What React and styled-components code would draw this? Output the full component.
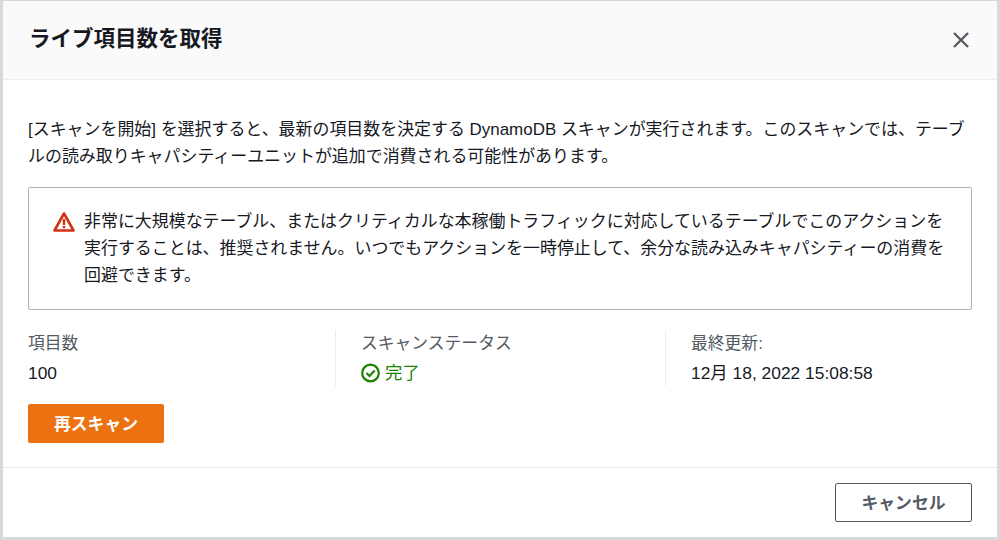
import React from 'react';
import styled, { createGlobalStyle } from 'styled-components';

const fontStack = '"Liberation Sans", "Noto Sans CJK JP", sans-serif';

const GlobalStyle = createGlobalStyle`
  html, body {
    margin: 0;
    padding: 0;
    background: #d5dbdb;
  }
  body {
    font-family: ${fontStack};
    color: #16191f;
  }
`;

const Modal = styled.div`
  box-sizing: border-box;
  width: 1000px;
  height: 540px;
  padding: 1px 3px 3px 3px;
  background: #d5dbdb;
  overflow: hidden;
`;

const Panel = styled.div`
  display: flex;
  flex-direction: column;
  height: 100%;
  background: #fff;
`;

const Header = styled.header`
  box-sizing: border-box;
  height: 79px;
  flex: none;
  display: flex;
  align-items: center;
  justify-content: space-between;
  padding: 0 27px 0 26px;
  background: #fafafa;
  border-bottom: 1px solid #eaeded;
`;

const Title = styled.h1`
  margin: 0 0 2px;
  font-size: 21.5px;
  line-height: 30px;
  font-weight: 700;
  color: #16191f;
`;

const CloseButton = styled.button`
  display: flex;
  padding: 0;
  border: 0;
  background: none;
  color: #545b64;
`;

const Body = styled.main`
  flex: 1;
  padding: 36px 25px 0;
`;

const Intro = styled.p`
  margin: 0 0 17px;
  font-size: 16.95px;
  line-height: 27px;
  color: #16191f;
`;

const Alert = styled.div`
  box-sizing: border-box;
  height: 123px;
  display: flex;
  gap: 9px;
  padding: 20px 24px;
  border: 1px solid #aab7b8;
  border-radius: 2px;
`;

const AlertIcon = styled.svg`
  flex: none;
  width: 22px;
  height: 22px;
  margin-top: 3px;
`;

const AlertText = styled.p`
  margin: 0;
  font-size: 16.95px;
  line-height: 27px;
`;

const Stats = styled.div`
  display: grid;
  grid-template-columns: 307px 330px 307px;
  margin-top: 20px;
`;

const Stat = styled.div`
  box-sizing: border-box;
  height: 56px;
  padding-left: ${(p) => (p.$first ? '0' : '25px')};
  border-left: ${(p) => (p.$first ? '0' : '1px solid #eaeded')};
`;

const StatLabel = styled.div`
  font-size: 16.8px;
  line-height: 28px;
  color: #545b64;
`;

const StatValue = styled.div`
  display: flex;
  align-items: center;
  gap: 4px;
  font-size: 17.4px;
  line-height: 30px;
  color: ${(p) => p.$color || '#16191f'};
`;

const Rescan = styled.button`
  display: block;
  width: 136px;
  height: 39px;
  margin-top: 18px;
  padding: 0 0 2px;
  border: 0;
  border-radius: 2px;
  background: #ec7211;
  color: #fff;
  font: 700 16.8px ${fontStack};
`;

const Footer = styled.footer`
  box-sizing: border-box;
  flex: none;
  height: 70px;
  display: flex;
  align-items: flex-start;
  justify-content: flex-end;
  padding: 15px 25px 0;
  border-top: 1px solid #eaeded;
`;

const Cancel = styled.button`
  box-sizing: border-box;
  width: 137px;
  height: 39px;
  padding: 0 0 2px;
  border: 1px solid #545b64;
  border-radius: 2px;
  background: #fff;
  color: #545b64;
  font: 700 16.8px ${fontStack};
`;

export default function App() {
  return (
    <>
      <GlobalStyle />
      <Modal>
        <Panel>
          <Header>
            <Title>ライブ項目数を取得</Title>
            <CloseButton aria-label="閉じる">
              <svg width="18" height="18" viewBox="0 0 18 18" fill="none" stroke="currentColor" strokeWidth="2.4">
                <path d="M2 2l14 14M16 2L2 16" />
              </svg>
            </CloseButton>
          </Header>
          <Body>
            <Intro>
              [スキャンを開始] を選択すると、最新の項目数を決定する DynamoDB スキャンが実行されます。このスキャンでは、テーブルの読み取りキャパシティーユニットが追加で消費される可能性があります。
            </Intro>
            <Alert>
              <AlertIcon viewBox="0 0 22 22" fill="none">
                <path d="M11 2.5L20.5 19.5H1.5Z" stroke="#d13212" strokeWidth="2.6" strokeLinejoin="round" />
                <path d="M11 8v6M11 15v2.2" stroke="#d13212" strokeWidth="2.4" />
              </AlertIcon>
              <AlertText>
                非常に大規模なテーブル、またはクリティカルな本稼働トラフィックに対応しているテーブルでこのアクションを実行することは、推奨されません。いつでもアクションを一時停止して、余分な読み込みキャパシティーの消費を回避できます。
              </AlertText>
            </Alert>
            <Stats>
              <Stat $first>
                <StatLabel>項目数</StatLabel>
                <StatValue>100</StatValue>
              </Stat>
              <Stat>
                <StatLabel>スキャンステータス</StatLabel>
                <StatValue $color="#1d8102">
                  <svg width="20" height="20" viewBox="0 0 20 20" fill="none" stroke="#1d8102" strokeWidth="2.2">
                    <circle cx="9.5" cy="10" r="8.3" />
                    <path d="M5.5 10l3 3 5.2-5.6" />
                  </svg>
                  完了
                </StatValue>
              </Stat>
              <Stat>
                <StatLabel>最終更新:</StatLabel>
                <StatValue>12月 18, 2022 15:08:58</StatValue>
              </Stat>
            </Stats>
            <Rescan>再スキャン</Rescan>
          </Body>
          <Footer>
            <Cancel>キャンセル</Cancel>
          </Footer>
        </Panel>
      </Modal>
    </>
  );
}
